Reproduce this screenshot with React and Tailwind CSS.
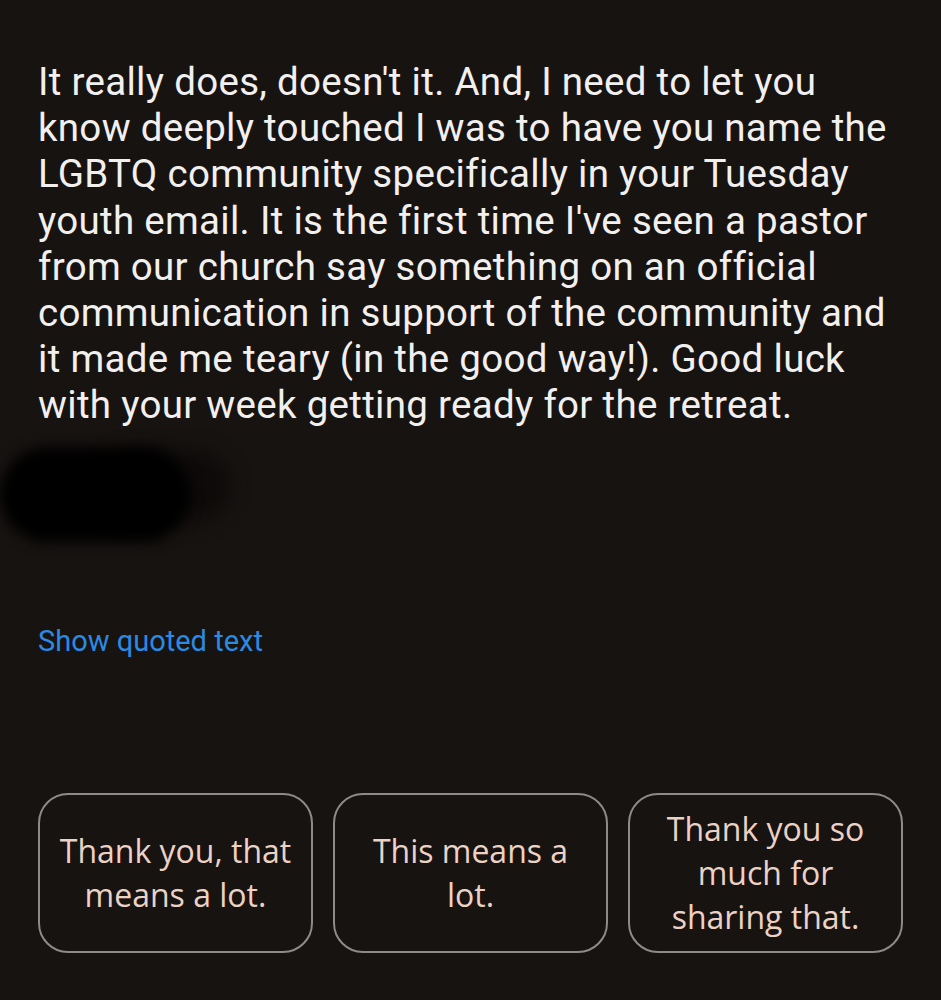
import React from "react";

const lines = [
  "It really does, doesn't it. And, I need to let you",
  "know deeply touched I was to have you name the",
  "LGBTQ community specifically in your Tuesday",
  "youth email. It is the first time I've seen a pastor",
  "from our church say something on an official",
  "communication in support of the community and",
  "it made me teary (in the good way!). Good luck",
  "with your week getting ready for the retreat.",
];

const replies = [
  ["Thank you, that", "means a lot."],
  ["This means a", "lot."],
  ["Thank you so", "much for", "sharing that."],
];

const App = () => {
  return (
    <div className="w-[941px] h-[1000px] bg-[#171311] overflow-hidden font-['Roboto',sans-serif]">
      <div className="pl-[38px] pt-[59px]">
        <p className="text-[38.5px] leading-[46.2px] text-[#f2f0ef] tracking-[0.3px]">
          {lines.map((line, i) => (
            <span key={i} className="block whitespace-nowrap">
              {line}
            </span>
          ))}
        </p>
      </div>

      {/* redacted signature */}
      <div className="h-[125px] relative">
        <div className="absolute left-[100px] top-[22px] w-[130px] h-[70px] rounded-full bg-[#0d0a09] blur-[10px]" />
        <div className="absolute left-[0px] top-[18px] w-[190px] h-[95px] rounded-full bg-black blur-[7px]" />
      </div>

      <div className="pl-[38px] pt-[69px]">
        <span className="text-[29px] leading-[36px] text-[#2b8ae2]">Show quoted text</span>
      </div>

      <div className="flex gap-[20px] pl-[38px] pt-[134px]">
        {replies.map((r, i) => (
          <button
            key={i}
            className="w-[275px] h-[160px] rounded-[30px] border-2 border-[#8e8a87] flex flex-col items-center justify-center text-[#ecd2c4] text-[32px] leading-[44px] font-medium font-['Open_Sans',sans-serif]"
          >
            {r.map((t, j) => (
              <span key={j}>{t}</span>
            ))}
          </button>
        ))}
      </div>
    </div>
  );
};

export default App;
